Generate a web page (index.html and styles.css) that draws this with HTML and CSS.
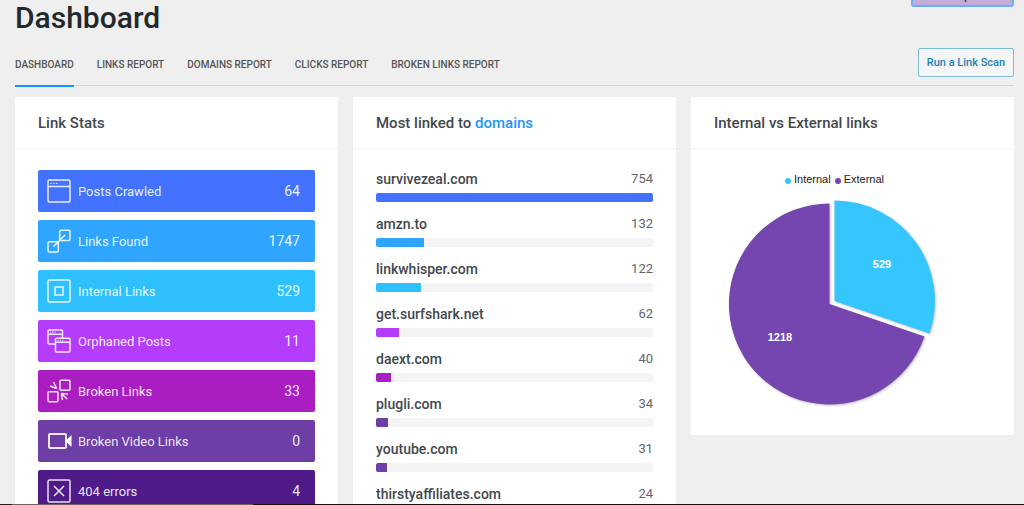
FILE: index.html
```html
<!DOCTYPE html>
<html lang="en">
<head>
<meta charset="utf-8">
<title>Dashboard</title>
<link rel="stylesheet" href="styles.css">
</head>
<body>
<div class="page">
  <header class="page-header">
    <h1 class="title">Dashboard</h1>
    <button class="btn-top" type="button">Link Update</button>
  </header>
  <div class="toolbar">
    <nav class="tabs">
      <a class="tab tab-active" href="#dashboard">Dashboard</a>
      <a class="tab" href="#links">Links Report</a>
      <a class="tab" href="#domains">Domains Report</a>
      <a class="tab" href="#clicks">Clicks Report</a>
      <a class="tab" href="#broken">Broken Links Report</a>
    </nav>
    <button class="btn-scan" type="button">Run a Link Scan</button>
  </div>
  <main class="cards">
    <section class="card">
      <h2 class="card-title">Link Stats</h2>
      <ul class="stats">
        <li class="stat c-blue">
          <svg class="icon" viewBox="0 0 24 24"><rect x="1" y="1" width="22" height="22" rx="1.5"/><path d="M1 7.5h22"/><path class="thin" d="M3.5 4.3h1.6M6.2 4.3h1.6M8.9 4.3h1.6"/></svg>
          <span class="stat-name">Posts Crawled</span><span class="stat-value">64</span>
        </li>
        <li class="stat c-sky">
          <svg class="icon" viewBox="0 0 24 24"><path d="M12.700 8V2.500a1.300 1.300 0 0 1 1.300-1.300h7.700a1.300 1.300 0 0 1 1.300 1.300v7.700a1.300 1.300 0 0 1-1.300 1.300H16M8 12.700H2.300A1.300 1.300 0 0 0 1 14v7.700A1.300 1.300 0 0 0 2.300 23H10a1.300 1.300 0 0 0 1.300-1.300V16"/><path d="M6.500 17.500L18 6M12.700 8v3.500H16M8 12.700h3.300V16"/></svg>
          <span class="stat-name">Links Found</span><span class="stat-value">1747</span>
        </li>
        <li class="stat c-cyan">
          <svg class="icon" viewBox="0 0 24 24"><rect x="1" y="1" width="22" height="22" rx="1.5"/><rect x="8" y="8" width="8" height="8"/></svg>
          <span class="stat-name">Internal Links</span><span class="stat-value">529</span>
        </li>
        <li class="stat c-violet">
          <svg class="icon" viewBox="0 0 24 24"><path d="M8.5 15H2a1 1 0 0 1-1-1V2a1 1 0 0 1 1-1h12.500a1 1 0 0 1 1 1v7M1 5.200h14.500"/><rect x="8.500" y="9.300" width="14.500" height="13.700" rx="1"/><path d="M8.500 13.200H23"/><path class="thin" d="M3 3.100h1.200M5.200 3.100h1.200M7.400 3.100h1.200M10.500 11.300h1.200M12.700 11.300h1.200M14.900 11.300h1.200"/></svg>
          <span class="stat-name">Orphaned Posts</span><span class="stat-value">11</span>
        </li>
        <li class="stat c-magenta">
          <svg class="icon" viewBox="0 0 24 24"><rect x="13" y="1.200" width="10" height="10" rx="1"/><rect x="1" y="12.800" width="10" height="10" rx="1"/><path d="M6.500 3l3.200 6.500M3 7l6.700 2.500M14.300 14.500l6.700.5M14.300 14.500l6 5.500M14.300 14.500l1.200 6.500"/></svg>
          <span class="stat-name">Broken Links</span><span class="stat-value">33</span>
        </li>
        <li class="stat c-purple">
          <svg class="icon" viewBox="0 0 24 24"><rect class="bold" x="2" y="5" width="17" height="14" rx="1"/><path class="solid" d="M18.500 12l6-6v12z"/></svg>
          <span class="stat-name">Broken Video Links</span><span class="stat-value">0</span>
        </li>
        <li class="stat c-indigo">
          <svg class="icon" viewBox="0 0 24 24"><rect x="1" y="1" width="22" height="22" rx="1.500"/><path d="M7 7l10 10M17 7L7 17"/></svg>
          <span class="stat-name">404 errors</span><span class="stat-value">4</span>
        </li>
      </ul>
    </section>
    <section class="card">
      <h2 class="card-title">Most linked to <a class="title-link" href="#domains">domains</a></h2>
      <ul class="domains">
        <li class="domain"><span>survivezeal.com</span><span class="count">754</span><div class="track"><div class="fill c-blue" style="width:100%"></div></div></li>
        <li class="domain"><span>amzn.to</span><span class="count">132</span><div class="track"><div class="fill c-sky" style="width:17.5%"></div></div></li>
        <li class="domain"><span>linkwhisper.com</span><span class="count">122</span><div class="track"><div class="fill c-cyan" style="width:16.2%"></div></div></li>
        <li class="domain"><span>get.surfshark.net</span><span class="count">62</span><div class="track"><div class="fill c-violet" style="width:8.2%"></div></div></li>
        <li class="domain"><span>daext.com</span><span class="count">40</span><div class="track"><div class="fill c-magenta" style="width:5.3%"></div></div></li>
        <li class="domain"><span>plugli.com</span><span class="count">34</span><div class="track"><div class="fill c-purple" style="width:4.5%"></div></div></li>
        <li class="domain"><span>youtube.com</span><span class="count">31</span><div class="track"><div class="fill c-purple" style="width:4.1%"></div></div></li>
        <li class="domain"><span>thirstyaffiliates.com</span><span class="count">24</span><div class="track"><div class="fill c-purple" style="width:3.2%"></div></div></li>
      </ul>
    </section>
    <section class="card">
      <h2 class="card-title">Internal vs External links</h2>
      <div class="chart">
        <div class="legend"><span class="key key-internal">Internal</span><span class="key key-external">External</span></div>
        <svg class="pie" viewBox="0 0 212 210" role="img" aria-label="529 internal, 1218 external">
          <path class="slice-external" d="M102.500 106V5.500A100.500 100.500 0 1 0 197.500 138.500Z"/>
          <path class="slice-internal" d="M107.500 103V2.500A100.500 100.500 0 0 1 202.500 135.500Z"/>
          <text class="slice-label" x="155" y="70">529</text>
          <text class="slice-label" x="53" y="143">1218</text>
        </svg>
      </div>
    </section>
  </main>
</div>
<div class="taskbar"></div>
</body>
</html>
```
FILE: styles.css
```css
* { box-sizing: border-box; }
body { margin: 0; height: 100vh; overflow: hidden; background: #efefef; color: #43484d; font-family: Roboto, "Liberation Sans", sans-serif; }
.page { padding: 0 10px 0 15px; }
.page-header { display: flex; justify-content: space-between; align-items: flex-start; height: 39px; }
.title { margin: 0; font-size: 30px; line-height: 36px; font-weight: 500; color: #23282d; }
.btn-top { width: 103px; height: 32px; margin-top: -25px; padding: 8px 0 0; border: 2px solid #6aaef5; border-radius: 3px; background: #c2add9; color: #32373c; font: 500 12px/16px Roboto, sans-serif; }
.toolbar { display: flex; justify-content: space-between; height: 47px; border-bottom: 1px solid #d5d6d7; }
.tabs { display: flex; gap: 23px; height: 48px; }
.tab { padding-top: 16px; font-size: 10px; line-height: 20px; font-weight: 500; text-transform: uppercase; text-decoration: none; color: #555; }
.tab-active { border-bottom: 2px solid #1595ff; }
.btn-scan { width: 96px; height: 29px; margin-top: 9px; padding: 0; border: 1px solid #7dbbdc; border-radius: 2px; background: #f3f5f6; color: #2580b3; font: 500 11px/16px Roboto, sans-serif; }
.cards { display: grid; grid-template-columns: repeat(3, 1fr); gap: 15px; align-items: start; padding-top: 11px; }
.card { background: #fff; border-radius: 2px; }
.card-title { margin: 0; padding: 14px 23px 13px; border-bottom: 1px solid #f3f3f3; font-size: 15px; line-height: 24px; font-weight: 500; }
.title-link { color: #1b95ff; text-decoration: none; }
.stats, .domains { margin: 0; list-style: none; }
.stats { display: grid; gap: 8px; padding: 21px 23px; }
.stat { display: flex; align-items: center; height: 42px; padding: 0 15px 0 9px; border-radius: 2px; color: rgba(255, 255, 255, .9); font-size: 13px; }
.stat-name { flex: 1; padding-left: 7px; }
.stat-value { font-size: 14px; }
.icon { width: 24px; height: 24px; overflow: visible; fill: none; stroke: #fff; stroke-opacity: .88; stroke-width: 1.5; }
.thin { stroke-width: 1; }
.bold { stroke-width: 2; }
.solid { fill: #fff; stroke: none; }
.c-blue { background: #4272ff; }
.c-sky { background: #2fa5ff; }
.c-cyan { background: #2fc1ff; }
.c-violet { background: #b43cfb; }
.c-magenta { background: #a91dc1; }
.c-purple { background: #6c3ea6; }
.c-indigo { background: #4e1b89; }
.domains { padding: 20px 23px; }
.domain { display: grid; grid-template-columns: 1fr auto; height: 45px; align-content: start; font-size: 14px; line-height: 20px; font-weight: 500; }
.count { color: #666; font-size: 13px; font-weight: 400; }
.track { grid-column: 1 / -1; height: 9px; margin-top: 4px; border-radius: 2px; background: #f4f4f4; overflow: hidden; }
.fill { height: 100%; }
.chart { padding: 20px 23px 22px; font-family: "Liberation Sans", Arial, sans-serif; }
.legend { display: flex; justify-content: center; gap: 4px; padding-right: 36px; font-size: 11px; line-height: 20px; color: #222; }
.key { display: flex; align-items: center; gap: 3px; }
.key::before { content: ""; width: 6px; height: 6px; margin-top: 3px; border-radius: 50%; background: currentColor; }
.key-internal::before { background: #35c4ff; }
.key-external::before { background: #7646b0; }
.pie { display: block; width: 212px; height: 220px; margin: 4px 0 0 13px; }
.slice-internal, .slice-external { filter: drop-shadow(1px 1px 1px rgba(0, 0, 0, .25)); }
.slice-internal { fill: #35c6ff; }
.slice-external { fill: #7646b0; }
.slice-label { fill: #fff; font-size: 11px; font-weight: 700; text-anchor: middle; }
.taskbar { position: fixed; left: 0; right: 0; bottom: 0; height: 1px; background: linear-gradient(90deg, #222 12px, #666 12px, #666 253px, #111 253px); }
```
